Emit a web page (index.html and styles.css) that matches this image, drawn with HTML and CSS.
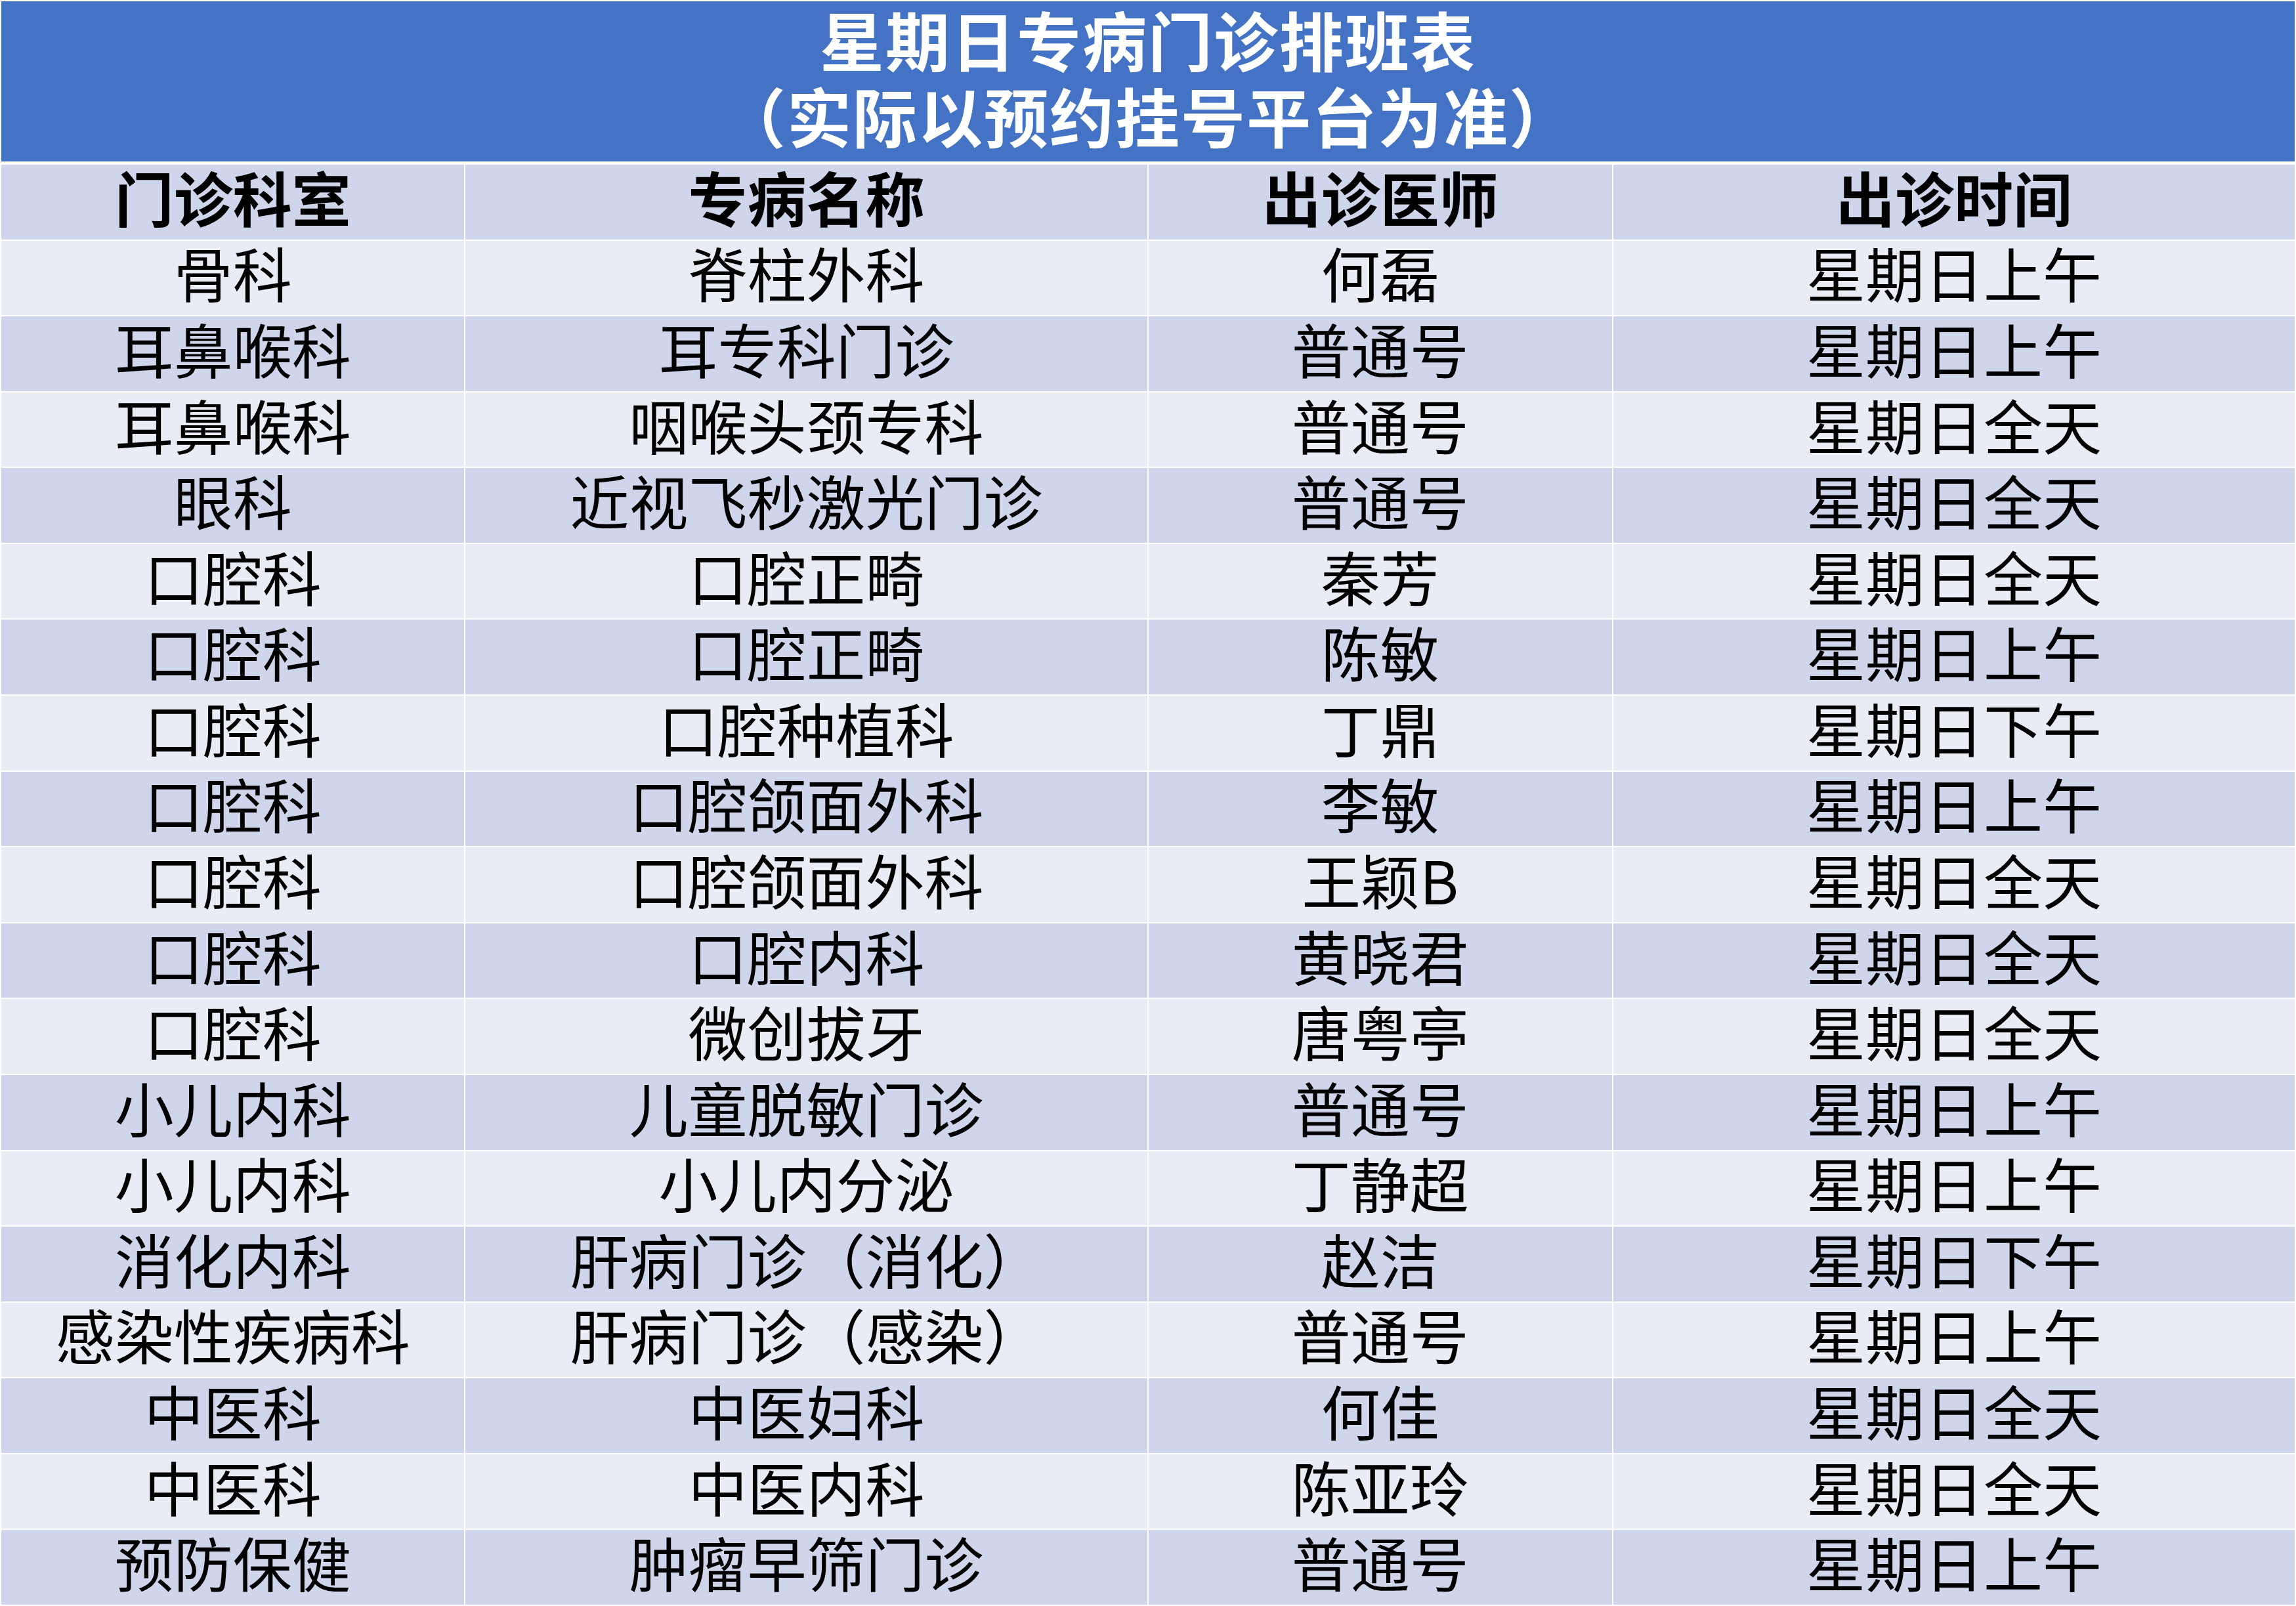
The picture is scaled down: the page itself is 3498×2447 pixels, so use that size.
FILE: index.html
```html
<!DOCTYPE html>
<html lang="zh-CN">
<head>
<meta charset="utf-8">
<title>星期日专病门诊排班表</title>
<link rel="stylesheet" href="styles.css">
</head>
<body>
<div class="page">
  <div class="title">
    <div class="title-line">星期日专病门诊排班表</div>
    <div class="title-line">（实际以预约挂号平台为准）</div>
  </div>
  <div class="table">
    <div class="row head"><div class="cell">门诊科室</div><div class="cell">专病名称</div><div class="cell">出诊医师</div><div class="cell">出诊时间</div></div>
    <div class="row light"><div class="cell">骨科</div><div class="cell">脊柱外科</div><div class="cell">何磊</div><div class="cell">星期日上午</div></div>
    <div class="row dark"><div class="cell">耳鼻喉科</div><div class="cell">耳专科门诊</div><div class="cell">普通号</div><div class="cell">星期日上午</div></div>
    <div class="row light"><div class="cell">耳鼻喉科</div><div class="cell">咽喉头颈专科</div><div class="cell">普通号</div><div class="cell">星期日全天</div></div>
    <div class="row dark"><div class="cell">眼科</div><div class="cell">近视飞秒激光门诊</div><div class="cell">普通号</div><div class="cell">星期日全天</div></div>
    <div class="row light"><div class="cell">口腔科</div><div class="cell">口腔正畸</div><div class="cell">秦芳</div><div class="cell">星期日全天</div></div>
    <div class="row dark"><div class="cell">口腔科</div><div class="cell">口腔正畸</div><div class="cell">陈敏</div><div class="cell">星期日上午</div></div>
    <div class="row light"><div class="cell">口腔科</div><div class="cell">口腔种植科</div><div class="cell">丁鼎</div><div class="cell">星期日下午</div></div>
    <div class="row dark"><div class="cell">口腔科</div><div class="cell">口腔颌面外科</div><div class="cell">李敏</div><div class="cell">星期日上午</div></div>
    <div class="row light"><div class="cell">口腔科</div><div class="cell">口腔颌面外科</div><div class="cell">王颖B</div><div class="cell">星期日全天</div></div>
    <div class="row dark"><div class="cell">口腔科</div><div class="cell">口腔内科</div><div class="cell">黄晓君</div><div class="cell">星期日全天</div></div>
    <div class="row light"><div class="cell">口腔科</div><div class="cell">微创拔牙</div><div class="cell">唐粤亭</div><div class="cell">星期日全天</div></div>
    <div class="row dark"><div class="cell">小儿内科</div><div class="cell">儿童脱敏门诊</div><div class="cell">普通号</div><div class="cell">星期日上午</div></div>
    <div class="row light"><div class="cell">小儿内科</div><div class="cell">小儿内分泌</div><div class="cell">丁静超</div><div class="cell">星期日上午</div></div>
    <div class="row dark"><div class="cell">消化内科</div><div class="cell">肝病门诊（消化）</div><div class="cell">赵洁</div><div class="cell">星期日下午</div></div>
    <div class="row light"><div class="cell">感染性疾病科</div><div class="cell">肝病门诊（感染）</div><div class="cell">普通号</div><div class="cell">星期日上午</div></div>
    <div class="row dark"><div class="cell">中医科</div><div class="cell">中医妇科</div><div class="cell">何佳</div><div class="cell">星期日全天</div></div>
    <div class="row light"><div class="cell">中医科</div><div class="cell">中医内科</div><div class="cell">陈亚玲</div><div class="cell">星期日全天</div></div>
    <div class="row dark"><div class="cell">预防保健</div><div class="cell">肿瘤早筛门诊</div><div class="cell">普通号</div><div class="cell">星期日上午</div></div>
  </div>
</div>
</body>
</html>
```
FILE: styles.css
```css
html, body {
  margin: 0;
  padding: 0;
  background: #ffffff;
}
body {
  font-family: "Noto Sans CJK SC", "Noto Sans", sans-serif;
  color: #000000;
}
.page {
  width: 3498px;
  height: 2447px;
  box-sizing: border-box;
  padding: 2px 2px 2px 2px;
  display: flex;
  flex-direction: column;
  gap: 5px;
}
.title {
  height: 244px;
  flex: none;
  box-sizing: border-box;
  padding-bottom: 16px;
  background: #4472c4;
  color: #ffffff;
  font-weight: bold;
  font-size: 98px;
  line-height: 116px;
  display: flex;
  flex-direction: column;
  align-items: center;
  justify-content: center;
  letter-spacing: 2px;
}
.table {
  flex: 1;
  display: flex;
  flex-direction: column;
  gap: 2px;
}
.row {
  flex: 1;
  display: grid;
  grid-template-columns: 706fr 1039fr 707fr 1039fr;
  column-gap: 2px;
}
.cell {
  display: flex;
  align-items: center;
  justify-content: center;
  box-sizing: border-box;
  padding-bottom: 18px;
  font-size: 90px;
  line-height: 1;
  white-space: nowrap;
}
.head .cell {
  background: #cfd5ea;
  font-weight: bold;
}
.dark .cell {
  background: #cfd5ea;
}
.light .cell {
  background: #e9ebf5;
}
```
